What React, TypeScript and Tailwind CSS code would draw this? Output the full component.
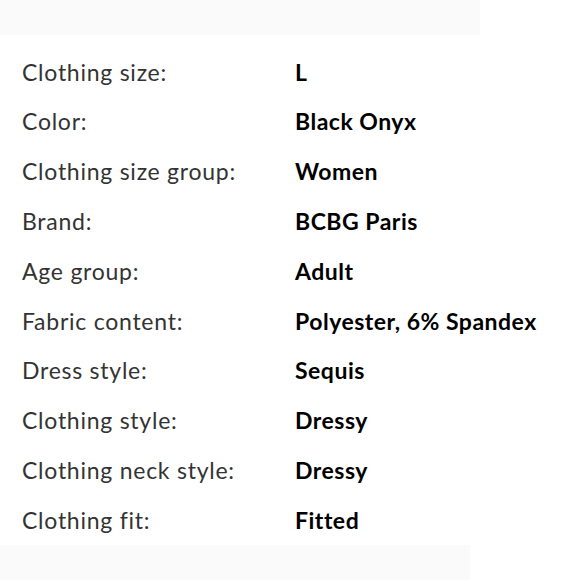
import React from 'react';

const rows: [string, string][] = [
  ['Clothing size:', 'L'],
  ['Color:', 'Black Onyx'],
  ['Clothing size group:', 'Women'],
  ['Brand:', 'BCBG Paris'],
  ['Age group:', 'Adult'],
  ['Fabric content:', 'Polyester, 6% Spandex'],
  ['Dress style:', 'Sequis'],
  ['Clothing style:', 'Dressy'],
  ['Clothing neck style:', 'Dressy'],
  ['Clothing fit:', 'Fitted'],
];

export default function App() {
  return (
    <div className="w-[580px] h-[580px] bg-white flex flex-col overflow-hidden" style={{ fontFamily: 'Lato, "Noto Sans", sans-serif' }}>
      <div className="h-[35px] w-[480px] bg-[#fafafa] shrink-0" />
      <div className="flex-1 pt-[12px] pl-[22px]">
        {rows.map(([label, value], i) => (
          <div key={i} className="h-[49.8px] flex items-center text-[23px]">
            <span className="w-[273px] shrink-0 text-[#333333] font-normal tracking-[0.75px]">{label}</span>
            <span className="font-bold text-black tracking-[0.5px] whitespace-nowrap">{value}</span>
          </div>
        ))}
      </div>
      <div className="h-[38px] w-[470px] bg-[#fafafa] shrink-0" />
    </div>
  );
}
